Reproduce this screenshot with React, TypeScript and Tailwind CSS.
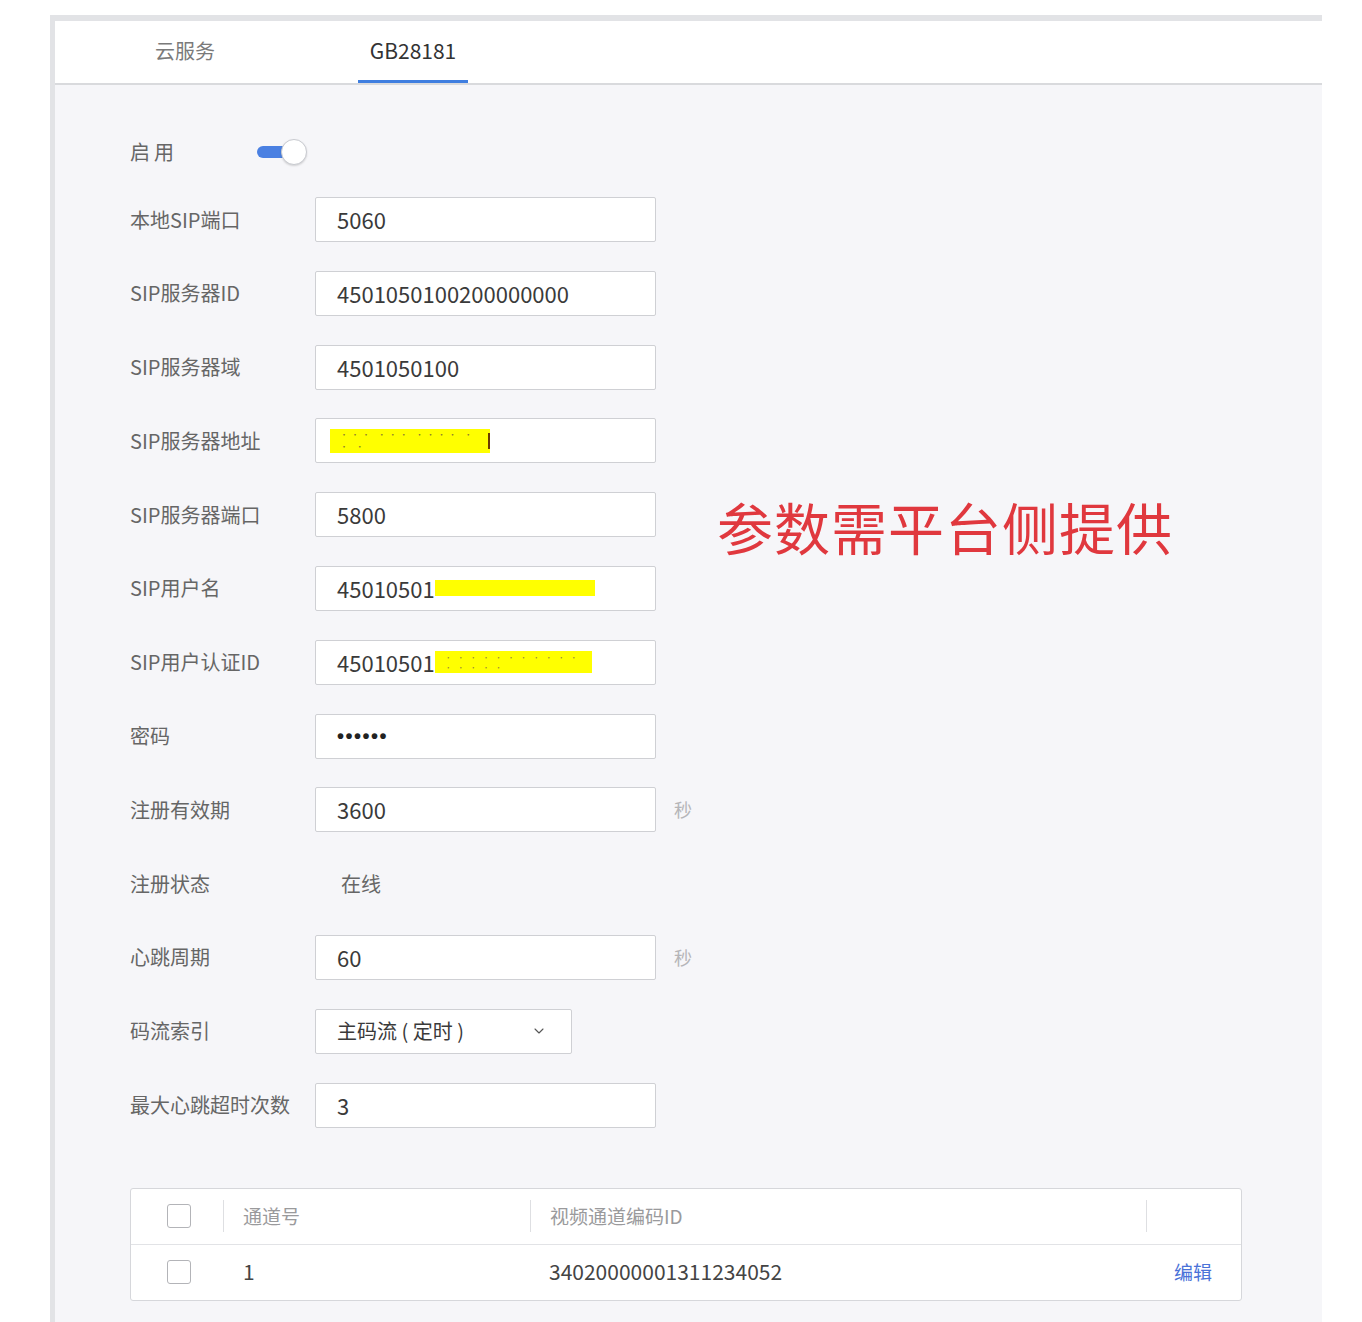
import { ChevronDown } from "lucide-react";

const font = { fontFamily: '"Noto Sans CJK SC", "Noto Sans", sans-serif' };

const Field = ({ label, children, unit }: { label: string; children?: React.ReactNode; unit?: boolean }) => (
  <div className="flex h-[45px] items-center">
    <div className="w-[185px] text-[20px] text-[#666]">{label}</div>
    {children}
    {unit && <span className="ml-[18px] text-[18px] text-[#b5b5b8]">秒</span>}
  </div>
);

const Box = ({ children, w = "w-[341px]" }: { children: React.ReactNode; w?: string }) => (
  <div className={`flex h-[45px] ${w} items-center rounded-[2px] border-[1.5px] border-[#cfd0d4] bg-white pl-[21px] text-[22px] text-[#3a3a3a]`}>
    {children}
  </div>
);

const Check = () => (
  <div className="h-[24px] w-[24px] rounded-[3px] border-[1.5px] border-[#b3b4b8] bg-white" />
);

export default function App() {
  return (
    <div className="h-[1322px] w-[1362px] overflow-hidden bg-white pl-[50px] pt-[15px]" style={font}>
      <div className="h-full w-[1272px] border-l-[5px] border-t-[6px] border-[#e2e3e6]">
        {/* tabs */}
        <div className="flex h-[64px] items-end border-b-2 border-[#d9dadd] bg-white pl-[75px]">
          <div className="flex h-full w-[110px] items-center justify-center pb-[2px] text-[20px] text-[#7a7a7a]">云服务</div>
          <div className="ml-[118px] flex h-full w-[110px] items-center justify-center border-b-[3px] border-[#3f7ee0] pt-[1px] text-[21px] text-[#333]">
            GB28181
          </div>
        </div>

        {/* content */}
        <div className="relative h-full bg-[#f6f6f9] pl-[75px] pt-[50px]">
          <div className="flex h-[33px] items-center">
            <div className="w-[127px] text-[20px] tracking-[4px] text-[#666]">启用</div>
            <div className="relative h-[26px] w-[52px]">
              <div className="absolute left-0 top-[7px] h-[12px] w-[34px] rounded-full bg-[#4a80e2]" />
              <div className="absolute left-[24px] top-0 h-[26px] w-[26px] rounded-full border-[1.5px] border-[#c8cad0] bg-white shadow-[0_1px_2px_rgba(0,0,0,0.15)]" />
            </div>
          </div>

          <div className="mt-[29px] flex flex-col gap-[28.8px]">
            <Field label="本地SIP端口"><Box>5060</Box></Field>
            <Field label="SIP服务器ID"><Box>4501050100200000000</Box></Field>
            <Field label="SIP服务器域"><Box>4501050100</Box></Field>
            <Field label="SIP服务器地址">
              <Box>
                <span className="-ml-[7px] flex h-[24px] w-[160px] items-center bg-[#ffff00] pl-[10px] text-[8px] tracking-[3px] text-[#8a7a30]">
                  ··· ··· ···· · · ·
                  <span className="ml-auto h-[16px] w-[2px] bg-[#6b3b00]" />
                </span>
              </Box>
            </Field>
            <Field label="SIP服务器端口"><Box>5800</Box></Field>
            <Field label="SIP用户名">
              <Box>
                45010501
                <span className="ml-0 inline-block h-[16px] w-[160px] bg-[#ffff00]" />
              </Box>
            </Field>
            <Field label="SIP用户认证ID">
              <Box>
                45010501
                <span className="ml-0 flex h-[22px] w-[157px] items-center bg-[#ffff00] pl-[10px] text-[7px] tracking-[2px] text-[#9c8b3a]">
                  · · ·  · · · · · · · · · · · · ·
                </span>
              </Box>
            </Field>
            <Field label="密码">
              <Box>
                <span
                  className="text-[20px] font-bold tracking-[1.5px] text-[#222]"
                  style={{ fontFamily: '"Liberation Sans", sans-serif' }}
                >
                  ••••••
                </span>
              </Box>
            </Field>
            <Field label="注册有效期" unit><Box>3600</Box></Field>
            <Field label="注册状态">
              <span className="pl-[26px] text-[20px] text-[#666]">在线</span>
            </Field>
            <Field label="心跳周期" unit><Box>60</Box></Field>
            <Field label="码流索引">
              <Box w="w-[257px]">
                <span className="text-[20px]">主码流 ( 定时 )</span>
                <ChevronDown className="ml-auto mr-[24px] text-[#555]" size={16} strokeWidth={1.6} />
              </Box>
            </Field>
            <Field label="最大心跳超时次数"><Box>3</Box></Field>
          </div>

          {/* table */}
          <div className="mt-[60px] w-[1112px] rounded-[3px] border-[1.5px] border-[#d6d7db] bg-white">
            <div className="flex h-[56px] items-center border-b-[1.5px] border-[#e2e3e6] text-[19px] text-[#9a9a9c]">
              <div className="flex w-[92px] justify-center pl-[4px]"><Check /></div>
              <div className="h-[32px] w-px bg-[#dedfe2]" />
              <div className="w-[306px] pl-[19px]">通道号</div>
              <div className="h-[32px] w-px bg-[#dedfe2]" />
              <div className="w-[615px] pl-[19px]">视频通道编码ID</div>
              <div className="h-[32px] w-px bg-[#dedfe2]" />
            </div>
            <div className="flex h-[55px] items-center text-[21px] text-[#444]">
              <div className="flex w-[92px] justify-center pl-[3px]"><Check /></div>
              <div className="w-[307px] pl-[20px]">1</div>
              <div className="w-[616px] pl-[19px]">34020000001311234052</div>
              <div className="pl-[28px] text-[19px] text-[#4a72d8]">编辑</div>
            </div>
          </div>

          {/* annotation */}
          <div className="absolute left-[662px] top-[413px] text-[56px] leading-none tracking-[1px] text-[#e0383e]">
            参数需平台侧提供
          </div>
        </div>
      </div>
    </div>
  );
}
